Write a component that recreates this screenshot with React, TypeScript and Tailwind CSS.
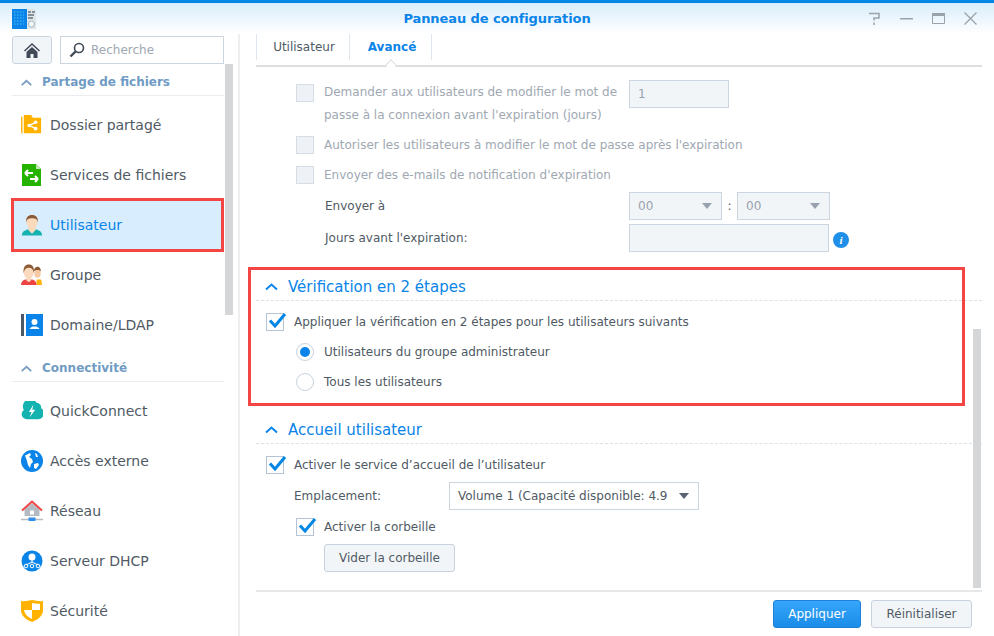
import React from "react";

const Chevron = ({ c, w = 15 }: { c: string; w?: number }) => (
  <svg width={w} height="9" viewBox="0 0 15 9" fill="none"><path d="M2 7.500 7.500 2.500 13 7.500" stroke={c} strokeWidth="2" /></svg>
);

const Check = () => (
  <span className="relative block w-[18px] h-[18px] shrink-0 border border-[#b4c4d6] bg-white">
    <svg className="absolute left-[1px] -top-[4px]" width="19" height="19" viewBox="0 0 19 19" fill="none">
      <path d="M2 10.500 7 16 17 4" stroke="#0086e5" strokeWidth="3" />
    </svg>
  </span>
);

const DisabledCheck = () => <span className="block w-[18px] h-[18px] shrink-0 border border-[#d5dde6] bg-[#eef1f5]" />;

const Caret = ({ c }: { c: string }) => (
  <svg width="12" height="6" viewBox="0 0 12 6"><path d="M1 0h10L6 6z" fill={c} /></svg>
);

const Folder = () => (
  <svg width="22" height="20" viewBox="0 0 24 22"><path d="M0 2h1.500v18H0z" fill="#ffb300" /><path d="M3 0h8l2 3h9v17H3z" fill="#ffb300" /><g stroke="#fff" strokeWidth="1.500"><path d="M9 11.500 16 8M9 11.500 16 15" /></g><circle cx="9" cy="11.500" r="2" fill="#fff" /><circle cx="16" cy="8" r="2" fill="#fff" /><circle cx="16" cy="15" r="2" fill="#fff" /></svg>
);
const FileSvc = () => (
  <svg width="22" height="22" viewBox="0 0 22 22"><path d="M1 0h14l5 5v17H1z" fill="#25b300" /><path d="M15 0l5 5h-5z" fill="#bfe8b0" /><path d="M4 9h8M4 9l3-3M4 9l3 3M17 15H9M17 15l-3-3M17 15l-3 3" stroke="#fff" strokeWidth="2" fill="none" /></svg>
);
const UserI = () => (
  <svg width="22" height="23" viewBox="0 0 24 24"><path d="M1 23c0-5 4-6 7-7h8c3 1 7 2 7 7z" fill="#14b3b0" /><path d="M8 14h8v3l-4 4-4-4z" fill="#fbd9bd" /><ellipse cx="12" cy="8" rx="6" ry="7.500" fill="#fbd9bd" /><path d="M5.500 9C5 3 8 .5 12 .5S19 3 18.500 9C18 5 16 4 12 4S6 5 5.500 9z" fill="#8a5a35" /></svg>
);
const GroupI = () => (
  <svg width="22" height="22" viewBox="0 0 24 24"><path d="M17 17h5l1 6h-6z" fill="#ffb300" /><ellipse cx="18" cy="10" rx="3.500" ry="5" fill="#f6c9a5" /><path d="M14 8c0-3 2-5 4-5s4 2 3.500 5C20 6 16 6 14 8z" fill="#8a5a35" /><path d="M0 23c0-4 3-6 6-6h5c3 0 6 2 6 6z" fill="#ef4444" /><ellipse cx="8.500" cy="9" rx="5.500" ry="7" fill="#fbd9bd" /><path d="M3 10C2 3 5 .5 8.500.5S15 3 14 10c-.5-4-2-6-5.500-6S3.500 6 3 10z" fill="#8a5a35" /><path d="M6 15h5v3l-2.500 2L6 18z" fill="#fbd9bd" /></svg>
);
const DomainI = () => (
  <svg width="22" height="22" viewBox="0 0 22 22"><path d="M0 0h3v22H0z" fill="#4d5866" /><path d="M5 0h17v22H5z" fill="#0a84e8" /><circle cx="13.500" cy="8" r="3" fill="#fff" /><path d="M8.500 15c1-2 3-2.500 5-2.500s4 .5 5 2.500z" fill="#fff" /></svg>
);
const Quick = () => (
  <svg width="22" height="20" viewBox="0 0 24 22"><path d="M6 20A5.500 5.500 0 0 1 3 10 8 8 0 0 1 17 2a5 5 0 0 1 5 6 6.500 6.500 0 0 1-3 12z" fill="#14b3b0" /><path d="M13.500 4 8.500 12h3l-2 6 6-8.500h-3.200z" fill="#fff" /></svg>
);
const Globe = () => (
  <svg width="22" height="22" viewBox="0 0 22 22"><circle cx="11" cy="11" r="11" fill="#0a84e8" /><path d="M4 5.500 9 3l1 2-2 2 3 2 1 3-2 2-1 4-2-3-1-4zM13 14l4-1 1 2-3 4-2-1zM14 3l2 1 1 3-2 0z" fill="#fff" /></svg>
);
const HomeNet = () => (
  <svg width="22" height="22" viewBox="0 0 22 22"><path d="M3.500 9.500V16h15V9.500L11 3z" fill="#b4bac4" /><path d="M9 10.500h4v4H9z" fill="#fff" /><path d="M1 10.500 11 1.500l10 9" stroke="#f04545" strokeWidth="2" fill="none" /><path d="M0 19.500h22" stroke="#b4bac4" strokeWidth="1.500" /><path d="M7.500 17.500h7V21h-7z" fill="#2f8fe8" /></svg>
);
const Dhcp = () => (
  <svg width="22" height="22" viewBox="0 0 22 22"><circle cx="11" cy="11" r="10.500" fill="#0a84e8" /><circle cx="11" cy="7" r="3.500" fill="#fff" /><g stroke="#fff" strokeWidth="1" fill="none"><path d="M11 10v3M5 15l6-3 6 3" /><circle cx="5" cy="16" r="1.800" /><circle cx="11" cy="16" r="1.800" /><circle cx="17" cy="16" r="1.800" /></g></svg>
);
const Shield = () => (
  <svg width="22" height="22" viewBox="0 0 22 22"><path d="M0 1q5 .5 11-1 6 1.500 11 1v9c0 6-5 9.500-11 12C5 19.500 0 16 0 10z" fill="#ffb300" /><path d="M11 3q3 1 8 .8V10h-8zM3 10h8v9q-7-3-8-9z" fill="#fff" /></svg>
);

const groups: [string, [string, React.ReactNode][]][] = [
  ["Partage de fichiers", [["Dossier partagé", <Folder />], ["Services de fichiers", <FileSvc />], ["Utilisateur", <UserI />], ["Groupe", <GroupI />], ["Domaine/LDAP", <DomainI />]]],
  ["Connectivité", [["QuickConnect", <Quick />], ["Accès externe", <Globe />], ["Réseau", <HomeNet />], ["Serveur DHCP", <Dhcp />], ["Sécurité", <Shield />]]],
];

const Section = ({ title }: { title: string }) => (
  <div className="h-[31px] flex items-center gap-[9px] pl-2 pt-[3px] border-b border-dashed border-[#dbe2ea] text-[15px] leading-5 text-[#0a84e8]">
    <Chevron c="#0a84e8" />
    <span>{title}</span>
  </div>
);

const DisRow = ({ children }: { children: React.ReactNode }) => (
  <div className="h-[30px] flex items-center gap-[10px] pl-10"><DisabledCheck /><span>{children}</span></div>
);

const Sel = ({ w, label }: { w: string; label: string }) => (
  <div className={`${w} h-7 flex items-center justify-between pl-2 pr-2 border border-[#ccd6e1] bg-[#f2f5f8] text-[#98a2ae]`}>
    <span>{label}</span><Caret c="#98a2ae" />
  </div>
);

export default function App() {
  return (
    <div className="relative w-[994px] h-[636px] overflow-hidden bg-white font-['DejaVu_Sans',sans-serif] text-[12px] text-[#505a64]">
      <header className="relative h-[34px] pt-[1px] border-t-[3px] border-[#0086e5] bg-gradient-to-b from-[#d9edfb] to-white flex items-center justify-center">
        <svg className="absolute left-3 top-[6px]" width="24" height="20" viewBox="0 0 24 20">
          <path d="M0 0h15v20H0z" fill="#0a84e8" /><path d="M15 0h9v20h-9z" fill="#dfe6ea" />
          <path d="M2 3h10M2 6h10M2 9h10M2 12h10M2 15h10" stroke="#4fc0f0" strokeDasharray="1.500 1.500" />
          <path d="M16 3h3M20 3h3M16 6h6M16 9h5" stroke="#2a3a48" />
          <circle cx="19.500" cy="15" r="3" fill="#f8fbfc" stroke="#a8b4bc" />
        </svg>
        <span className="text-[13px] font-bold text-[#0a84e8] tracking-[-0.08px]">Panneau de configuration</span>
        <div className="absolute right-[17px] top-[9px] flex items-center gap-[19px]">
          <svg width="13" height="13" viewBox="0 0 13 13" fill="none" stroke="#9aa2aa" strokeWidth="1.500"><path d="M1 1.500h10v4.500H6v2.500M6 10.500V13" /></svg>
          <svg width="13" height="13" viewBox="0 0 13 13"><path d="M0 6h13v1.500H0z" fill="#9aa2aa" /></svg>
          <svg width="13" height="13" viewBox="0 0 13 13" fill="none"><path d="M.500 1.500h12v10H.500z" stroke="#9aa2aa" /><path d="M0 1h13v3H0z" fill="#9aa2aa" /></svg>
          <svg width="13" height="13" viewBox="0 0 13 13" fill="none" stroke="#9aa2aa" strokeWidth="1.300"><path d="M.500.500l12 12M12.500.500l-12 12" /></svg>
        </div>
      </header>

      <div className="flex h-[602px]">
        <aside className="w-[240px] border-r-2 border-[#eeeeee] pl-3 pr-[14px] shrink-0">
          <div className="h-[30px] flex gap-2 pt-[2px]">
            <div className="w-10 h-7 rounded-[3px] border border-[#cbd5e0] bg-[#f2f5f8] flex items-center justify-center">
              <svg width="16" height="15" viewBox="0 0 16 15"><path d="M8 0 0 7.500l1 1L8 2l7 6.500 1-1zM2.500 9 8 4l5.500 5v6H9.500v-4h-3v4h-4z" fill="#3f4a56" /></svg>
            </div>
            <div className="flex-1 h-7 border border-[#cbd5e0] bg-white flex items-center gap-[6px] pl-2 text-[#a0a8b2]">
              <svg width="16" height="16" viewBox="0 0 16 16" fill="none" stroke="#3f4a56"><circle cx="10" cy="6" r="4.500" strokeWidth="1.600" /><path d="M6.500 9.500 1.500 14.500" strokeWidth="2.400" /></svg>
              <span>Recherche</span>
            </div>
          </div>
          {groups.map(([title, items]) => (
            <div key={title}>
              <div className="h-8 mb-1 flex items-center gap-[9px] pl-2 pt-[5px] border-b border-[#e9edf1] font-bold text-[#6f9bc4] text-[12px]">
                <Chevron c="#7a9cc0" w={13} />
                <span>{title}</span>
              </div>
              {items.map(([label, icon]) => (
                <div key={label} className={`h-[50px] flex items-center text-[14px] pr-1 ${label === "Utilisateur" ? "bg-[#d8edfd] text-[#0a84e8]" : ""}`}>
                  <span className="w-[38px] pl-[2px] flex justify-center shrink-0">{icon}</span>
                  <span>{label}</span>
                </div>
              ))}
            </div>
          ))}
        </aside>

        <main className="flex-1 pl-4 pr-3 flex flex-col min-w-0">
          <div className="relative h-[33px] shrink-0 border-b-2 border-[#dcdee0] flex text-[12px]">
            <div className="h-[26px] w-[94px] border-x border-[#dfe6ee] flex items-center justify-center pl-[2px]">Utilisateur</div>
            <div className="h-[26px] w-[82px] border-r border-[#dfe6ee] flex items-center justify-center pl-[3px] font-bold text-[#0a84e8]">Avancé</div>
            <span className="absolute left-[131px] top-[27px] w-2 h-2 rotate-45 bg-white border-l border-t border-[#dcdee0]" />
          </div>

          <div className="flex-1 overflow-hidden border-b-2 border-[#e6e8ea] text-[#a0a8b2]">
            <div className="pt-[13px] flex pl-10 gap-[10px] h-[63px]">
              <span className="mt-1 h-[18px]"><DisabledCheck /></span>
              <div className="w-[295px] leading-[23px] mt-[1px]">
                Demander aux utilisateurs de modifier le mot de passe à la connexion avant l'expiration (jours)
              </div>
              <div className="w-[100px] h-7 border border-[#ccd6e1] bg-[#f2f5f8] flex items-center pl-2 text-[#98a2ae]">1</div>
            </div>
            <DisRow>Autoriser les utilisateurs à modifier le mot de passe après l'expiration</DisRow>
            <DisRow>Envoyer des e-mails de notification d'expiration</DisRow>
            <div className="mt-[2px] h-7 mb-1 flex items-center pl-[69px]">
              <span className="w-[304px] text-[#505a64]">Envoyer à</span>
              <Sel w="w-[93px]" label="00" />
              <span className="w-[15px] text-center text-[#505a64]">:</span>
              <Sel w="w-[93px]" label="00" />
            </div>
            <div className="h-7 flex items-center pl-[69px]">
              <span className="w-[304px] text-[#505a64]">Jours avant l'expiration:</span>
              <div className="w-[200px] h-7 border border-[#ccd6e1] bg-[#f2f5f8]" />
              <span className="ml-[4px] mt-[4px] w-4 h-4 rounded-full bg-[#1f8fe8] text-white text-[11px] font-bold italic leading-4 text-center font-['Liberation_Serif',serif]">i</span>
            </div>

            <div className="mt-[18px] text-[#505a64]">
              <Section title="Vérification en 2 étapes" />
              <div className="mt-[6px] h-[30px] flex items-center gap-[10px] pl-[10px]"><Check /><span>Appliquer la vérification en 2 étapes pour les utilisateurs suivants</span></div>
              <div className="h-[30px] flex items-center gap-[10px] pl-10">
                <span className="w-[18px] h-[18px] rounded-full border border-[#c8d2de] flex items-center justify-center"><span className="w-[10px] h-[10px] rounded-full bg-[#0a84e8]" /></span>
                <span>Utilisateurs du groupe administrateur</span>
              </div>
              <div className="h-[30px] flex items-center gap-[10px] pl-10">
                <span className="w-[18px] h-[18px] rounded-full border border-[#c8d2de]" />
                <span>Tous les utilisateurs</span>
              </div>

              <div className="mt-4"><Section title="Accueil utilisateur" /></div>
              <div className="mt-[6px] h-[30px] flex items-center gap-[10px] pl-[10px]"><Check /><span>Activer le service d’accueil de l’utilisateur</span></div>
              <div className="mt-[2px] h-7 flex items-center pl-[38px]">
                <span className="w-[155px]">Emplacement:</span>
                <div className="w-[250px] h-7 flex items-center justify-between pl-2 pr-2 border border-[#ccd6e1] bg-white">
                  <span>Volume 1 (Capacité disponible: 4.9</span><Caret c="#5a6470" />
                </div>
              </div>
              <div className="mt-[2px] h-[30px] flex items-center gap-[10px] pl-10"><Check /><span>Activer la corbeille</span></div>
              <div className="mt-[2px] pl-[68px]">
                <div className="w-[131px] h-7 rounded-[3px] border border-[#c8d2de] bg-[#f2f5f8] flex items-center justify-center">Vider la corbeille</div>
              </div>
            </div>
          </div>

          <footer className="h-[44px] shrink-0 pt-2 pr-[10px] flex justify-end gap-[10px]">
            <div className="w-[88px] h-7 rounded-[3px] border border-[#1b82d8] bg-gradient-to-b from-[#35a6fb] to-[#1a8ce8] text-white flex items-center justify-center">Appliquer</div>
            <div className="w-[101px] h-7 rounded-[3px] border border-[#c8d2de] bg-[#f2f5f8] flex items-center justify-center">Réinitialiser</div>
          </footer>
        </main>
      </div>

      <span className="absolute left-[225px] top-16 w-2 h-[251px] bg-[#d4d6d8]" />
      <span className="absolute left-[973px] top-[329px] w-2 h-[259px] bg-[#d4d6d8]" />
      <span className="absolute left-[11px] top-[198px] w-[213px] h-[54px] border-[3px] border-[#f44545]" />
      <span className="absolute left-[248px] top-[267px] w-[717px] h-[139px] border-[3px] border-[#f44545]" />
    </div>
  );
}
